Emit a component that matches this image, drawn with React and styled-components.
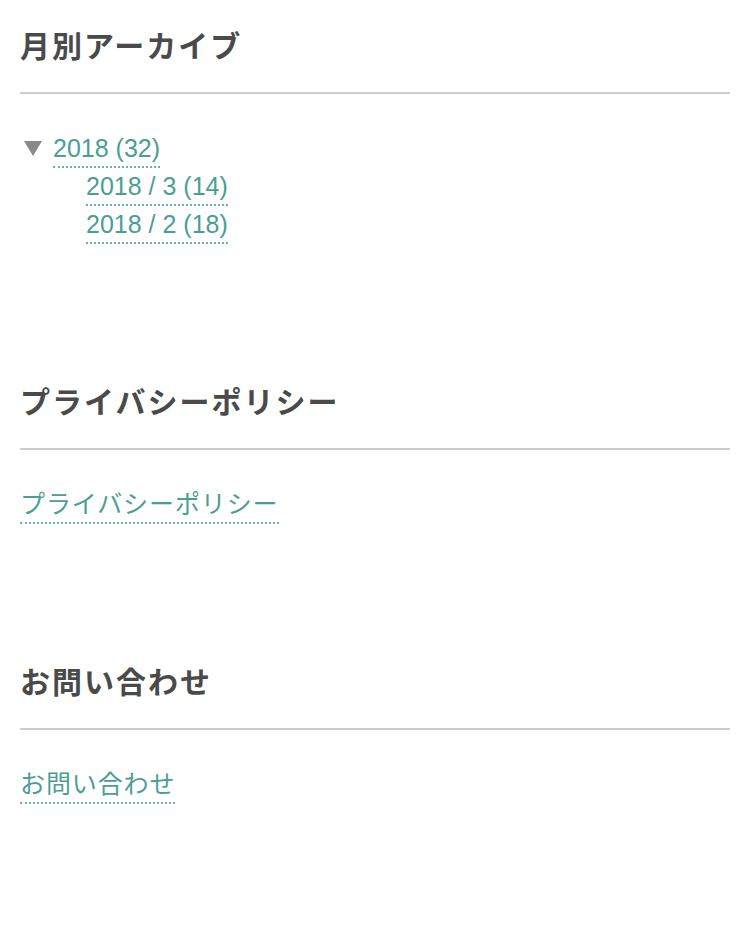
import React from "react";
import styled, { createGlobalStyle } from "styled-components";

const Global = createGlobalStyle`
  html, body { margin: 0; padding: 0; background: #ffffff; }
  body {
    font-family: "Liberation Sans", "Noto Sans CJK JP", sans-serif;
    -webkit-font-smoothing: antialiased;
  }
`;

const Page = styled.div`
  padding: 27px 20px 0 20px;
  display: flex;
  flex-direction: column;
  gap: 139px;
`;

const Widget = styled.section`
  display: flex;
  flex-direction: column;
`;

const Title = styled.h2`
  margin: 0;
  font-family: "Liberation Sans", "Noto Sans CJK JP", sans-serif;
  font-size: 30px;
  font-weight: 700;
  line-height: 40px;
  letter-spacing: 2px;
  color: #4a4a4a;
  padding-bottom: 25px;
  border-bottom: 2px solid #cccccc;
`;

const Body = styled.div`
  padding-top: 39px;
`;

const List = styled.ul`
  list-style: none;
  margin: 0;
  padding: 0 0 0 ${(p) => p.$indent || 0}px;
  display: flex;
  flex-direction: column;
  gap: 3px;
`;

const Row = styled.li`
  display: flex;
  align-items: flex-start;
  flex-direction: column;
  gap: 3px;
`;

const Toggle = styled.div`
  display: flex;
  align-items: flex-start;
`;

const Arrow = styled.span`
  width: 33px;
  height: 30px;
  display: flex;
  align-items: center;
  padding-left: 4px;
  box-sizing: border-box;
`;

const Link = styled.a`
  display: inline-block;
  font-size: 25px;
  line-height: 30px;
  padding-bottom: 3px;
  letter-spacing: ${(p) => (p.$cjk ? "0.9px" : "0")};
  color: #4b9e94;
  text-decoration: none;
  border-bottom: 2px dotted #6bb3aa;
`;

export default function App() {
  return (
    <>
      <Global />
      <Page>
        <Widget>
          <Title>月別アーカイブ</Title>
          <Body>
            <List>
              <Row>
                <Toggle>
                  <Arrow>
                    <svg width="18" height="16" viewBox="0 0 18 16">
                      <polygon points="0,1 18,1 9,16" fill="#8a8a8a" />
                    </svg>
                  </Arrow>
                  <Link href="#">2018 (32)</Link>
                </Toggle>
                <List $indent={66}>
                  <Row>
                    <Link href="#">2018 / 3 (14)</Link>
                  </Row>
                  <Row>
                    <Link href="#">2018 / 2 (18)</Link>
                  </Row>
                </List>
              </Row>
            </List>
          </Body>
        </Widget>
        <Widget>
          <Title>プライバシーポリシー</Title>
          <Body>
            <Link href="#" $cjk>プライバシーポリシー</Link>
          </Body>
        </Widget>
        <Widget>
          <Title>お問い合わせ</Title>
          <Body>
            <Link href="#" $cjk>お問い合わせ</Link>
          </Body>
        </Widget>
      </Page>
    </>
  );
}
